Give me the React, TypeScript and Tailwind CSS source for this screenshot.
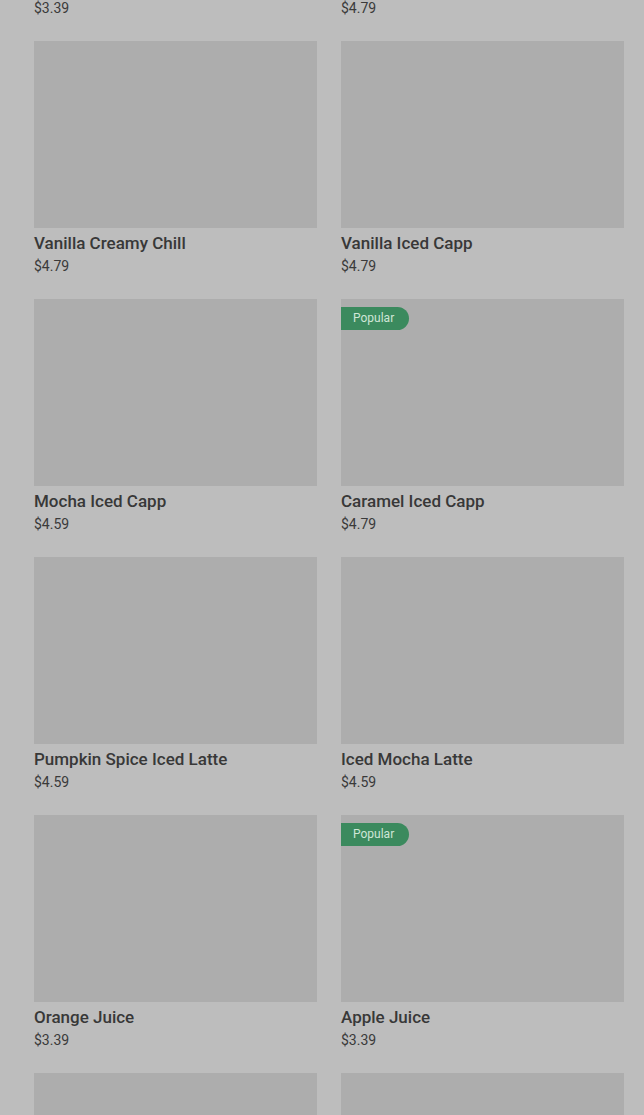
import React from "react";

type Item = { name: string; price: string; popular?: boolean };

const items: Item[] = [
  { name: "Iced Coffee", price: "$3.39" },
  { name: "Iced Latte", price: "$4.79" },
  { name: "Vanilla Creamy Chill", price: "$4.79" },
  { name: "Vanilla Iced Capp", price: "$4.79" },
  { name: "Mocha Iced Capp", price: "$4.59" },
  { name: "Caramel Iced Capp", price: "$4.79", popular: true },
  { name: "Pumpkin Spice Iced Latte", price: "$4.59" },
  { name: "Iced Mocha Latte", price: "$4.59" },
  { name: "Orange Juice", price: "$3.39" },
  { name: "Apple Juice", price: "$3.39", popular: true },
  { name: "Lemonade", price: "$3.39" },
  { name: "Iced Tea", price: "$3.39" },
];

export default function App() {
  return (
    <div
      className="w-[644px] h-[1115px] overflow-hidden bg-[#bdbdbd]"
      style={{ fontFamily: "Roboto, 'Liberation Sans', sans-serif" }}
    >
      <div className="mt-[-217px] pl-[34px] pr-[20px] grid grid-cols-2 gap-x-[24px] gap-y-[23px]">
        {items.map((it) => (
          <div key={it.name} className="flex flex-col">
            <div className="relative h-[187px] bg-[#adadad]">
              {it.popular && (
                <div className="absolute left-0 top-[8px] h-[23px] w-[68px] rounded-r-full bg-[#3b8a5e] text-[#cfe6d7] text-[12px] leading-[23px] pl-[12px]">
                  Popular
                </div>
              )}
            </div>
            <div className="mt-[2px] h-[26px] leading-[26px] text-[17px] font-medium text-[#383838]">
              {it.name}
            </div>
            <div className="h-[20px] leading-[20px] text-[14px] text-[#3a3a3a]">
              {it.price}
            </div>
          </div>
        ))}
      </div>
    </div>
  );
}
